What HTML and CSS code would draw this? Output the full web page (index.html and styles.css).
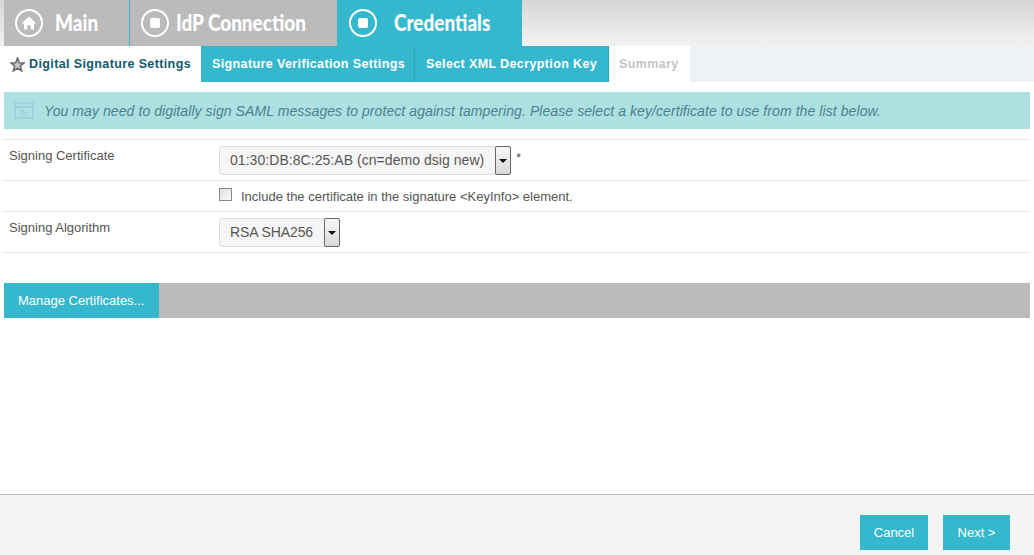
FILE: index.html
```html
<!DOCTYPE html>
<html lang="en">
<head>
    <meta charset="UTF-8">
    <title>IdP Connection - Credentials</title>
    <link rel="stylesheet" href="styles.css">
</head>
<body>
    <div class="page">
        <div class="main-tabs">
            <div class="main-tab main-tab-home">
                <span class="tab-circle">
                    <svg width="16" height="16" viewBox="0 0 16 16"><path d="M8 1.5 L15.5 8.5 H13 V14.5 H9.7 V10.2 H6.3 V14.5 H3 V8.5 H.5 Z" fill="#fff"/></svg>
                </span>
                <span class="tab-title">Main</span>
            </div>
            <div class="main-tab main-tab-conn">
                <span class="tab-circle"><span class="tab-dot"></span></span>
                <span class="tab-title">IdP Connection</span>
            </div>
            <div class="main-tab main-tab-active">
                <span class="tab-circle"><span class="tab-dot"></span></span>
                <span class="tab-title">Credentials</span>
            </div>
        </div>

        <div class="sub-tabs">
            <div class="sub-tab sub-tab-current">
                <svg width="15" height="15" viewBox="0 0 16 16"><path d="M8 1.2 L9.9 6.1 L15.2 6.3 L11 9.6 L12.5 14.8 L8 11.8 L3.5 14.8 L5 9.6 L.8 6.3 L6.1 6.1 Z" fill="#c8c8c8" stroke="#666" stroke-width="1.6"/></svg>
                Digital Signature Settings
            </div>
            <div class="sub-tab sub-tab-verify">Signature Verification Settings</div>
            <div class="sub-tab sub-tab-key">Select XML Decryption Key</div>
            <div class="sub-tab sub-tab-off">Summary</div>
        </div>

        <div class="banner">
            <svg class="banner-icon" width="20" height="17" viewBox="0 0 20 17">
                <rect x="1" y="1" width="18" height="15" fill="none" stroke="#9cd3de" stroke-width="2"/>
                <path d="M1 5 H19" stroke="#9cd3de" stroke-width="2"/>
                <path d="M7 8 L11 10.5 L7 13" fill="none" stroke="#9cd3de" stroke-width="2"/>
            </svg>
            You may need to digitally sign SAML messages to protect against tampering. Please select a key/certificate to use from the list below.
        </div>

        <div class="form">
            <div class="form-row row-cert">
                <div class="form-label">Signing Certificate</div>
                <div class="form-field">
                    <div class="select">
                        <span class="select-text select-text-cert">01:30:DB:8C:25:AB (cn=demo dsig new)</span>
                        <span class="select-arrow"></span>
                    </div>
                    <span class="required">*</span>
                </div>
            </div>
            <div class="form-row row-check">
                <div class="form-label"></div>
                <div class="form-field">
                    <span class="checkbox"></span>
                    <span class="check-label">Include the certificate in the signature &lt;KeyInfo&gt; element.</span>
                </div>
            </div>
            <div class="form-row row-algo">
                <div class="form-label">Signing Algorithm</div>
                <div class="form-field">
                    <div class="select">
                        <span class="select-text select-text-algo">RSA SHA256</span>
                        <span class="select-arrow"></span>
                    </div>
                </div>
            </div>
        </div>

        <div class="action-bar">
            <div class="action-button">Manage Certificates...</div>
        </div>

        <div class="spacer"></div>

        <div class="footer">
            <div class="footer-button btn-cancel">Cancel</div>
            <div class="footer-button btn-next">Next &gt;</div>
        </div>
    </div>
</body>
</html>
```

FILE: styles.css
```css
html, body {
    margin: 0;
    height: 100%;
    overflow: hidden;
}

body {
    font-family: 'Liberation Sans', Arial, sans-serif;
    background: white;
    color: #555;
}

.page {
    height: 555px;
    display: flex;
    flex-direction: column;
}

.main-tabs {
    display: flex;
    height: 46px;
    padding-left: 4px;
    background: linear-gradient(180deg, #d6d6d6 0%, #f2f2f2 100%);
}

.main-tab {
    display: flex;
    align-items: center;
    background: #bbbbbb;
    color: white;
    box-sizing: border-box;
    border-right: 1px solid #35b8cd;
}

.main-tab-home { width: 126px; padding-left: 11px; }
.main-tab-conn { width: 208px; padding-left: 11px; }
.main-tab-active { width: 184px; padding-left: 11px; background: #35b8cd; border-right: none; }

.tab-circle {
    width: 28px;
    height: 28px;
    box-sizing: border-box;
    border: 2px solid white;
    border-radius: 50%;
    display: flex;
    align-items: center;
    justify-content: center;
    flex: none;
}

.tab-dot {
    width: 10px;
    height: 10px;
    background: white;
    border-radius: 2px;
}

.tab-title {
    font-family: 'Lato', 'Liberation Sans', sans-serif;
    font-size: 22px;
    font-weight: 900;
    white-space: nowrap;
    padding-bottom: 2px;
    transform: scaleX(0.86);
    transform-origin: left center;
}

.main-tab-home .tab-title { margin-left: 12px; }
.main-tab-conn .tab-title { margin-left: 7px; }
.main-tab-active .tab-title { margin-left: 17px; }

.sub-tabs {
    display: flex;
    height: 36px;
    margin-left: 4px;
    background: #eef2f6;
}

.sub-tab {
    display: flex;
    align-items: center;
    box-sizing: border-box;
    font-size: 12.5px;
    font-weight: 700;
    letter-spacing: 0.38px;
    color: white;
    background: #35b8cd;
    padding-bottom: 1px;
}

.sub-tab-current {
    width: 197px;
    padding-left: 6px;
    padding-bottom: 0;
    gap: 4px;
    background: white;
    color: #0f5a6b;
}

.sub-tab-verify { width: 214px; padding-left: 11px; border-right: 1px solid #2ba3b8; }
.sub-tab-key { width: 194px; padding-left: 11px; border-right: 1px solid #2ba3b8; }
.sub-tab-off { width: 81px; padding-left: 10px; padding-bottom: 0; background: white; color: #c4c4c4; }

.banner {
    display: flex;
    align-items: center;
    gap: 10px;
    height: 37px;
    margin: 10px 4px 10px 4px;
    padding-left: 10px;
    background: #ade0e0;
    color: #4d8090;
    font-size: 14px;
    letter-spacing: 0.08px;
    font-style: italic;
}

.banner-icon { flex: none; }

.form {
    margin-left: 4px;
    margin-right: 4px;
    border-top: 1px solid #e6e6e6;
}

.form-row {
    display: flex;
    border-bottom: 1px solid #e6e6e6;
    box-sizing: border-box;
    font-size: 13px;
}

.row-cert { height: 41px; }
.row-check { height: 31px; }
.row-algo { height: 41px; }

.form-label {
    width: 215px;
    padding: 8px 0 0 5px;
    box-sizing: border-box;
    color: #555;
}

.form-field {
    display: flex;
    align-items: center;
}

.select {
    display: flex;
    align-items: stretch;
    height: 29px;
    box-sizing: border-box;
    background: #f5f5f5;
    border: 1px solid #ddd;
    border-radius: 4px;
    font-size: 14px;
}

.select-text {
    display: flex;
    align-items: center;
    padding-left: 10px;
    box-sizing: border-box;
    color: #555;
    white-space: nowrap;
}

.select-text-cert { width: 275px; letter-spacing: 0.05px; }
.select-text-algo { width: 104px; letter-spacing: -0.1px; }

.select-arrow {
    position: relative;
    width: 16px;
    margin: -1px -1px -1px 0;
    box-sizing: border-box;
    background: linear-gradient(180deg, #f8f8f8, #d8d8d8);
    border: 1px solid #666;
    border-radius: 2px;
}

.select-arrow::after {
    content: "";
    position: absolute;
    left: 3px;
    top: 12px;
    border-left: 4px solid transparent;
    border-right: 4px solid transparent;
    border-top: 4px solid #111;
}

.required {
    margin-left: 5px;
    margin-bottom: 5px;
    font-size: 13px;
}

.checkbox {
    width: 11px;
    height: 11px;
    background: linear-gradient(135deg, #e2e2e2, #f8f8f8);
    border: 1px solid #888;
    margin-right: 9px;
    margin-bottom: 3px;
}

.check-label {
    color: #555;
    padding-top: 1px;
}

.action-bar {
    display: flex;
    height: 35px;
    margin: 30px 4px 0 4px;
    background: #bbbbbb;
}

.action-button {
    display: flex;
    align-items: center;
    width: 155px;
    padding-left: 14px;
    box-sizing: border-box;
    background: #35b8cd;
    color: white;
    font-size: 13px;
}

.spacer {
    flex: 1;
}

.footer {
    display: flex;
    justify-content: flex-end;
    gap: 15px;
    height: 61px;
    box-sizing: border-box;
    padding: 20px 24px 0 0;
    background: #f4f4f4;
    border-top: 1px solid #bbbbbb;
}

.footer-button {
    display: flex;
    align-items: center;
    justify-content: center;
    height: 35px;
    background: #35b8cd;
    color: white;
    font-size: 13px;
}

.btn-cancel { width: 68px; }
.btn-next { width: 67px; }
```
